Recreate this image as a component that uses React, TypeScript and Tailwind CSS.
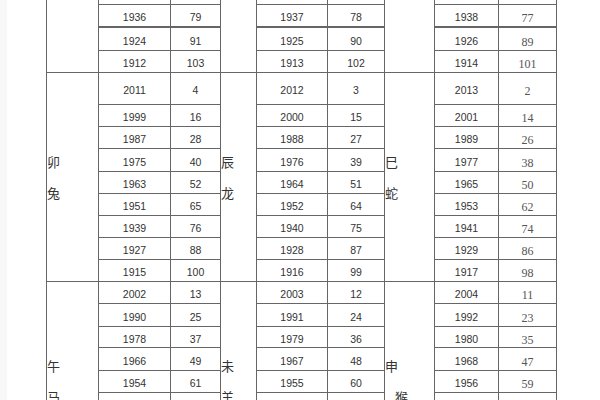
import React from 'react';

type Row = { y: [string, string, string]; a: [string, string, string]; h: string; thick?: boolean };

const blocks = [
  { label: 'w-[52px]', year: 'w-[72px]', age: 'w-[50px]', ageFont: "font-['Liberation_Sans',sans-serif] text-[10.5px] text-[#333]" },
  { label: 'w-[36px]', year: 'w-[71px]', age: 'w-[57px]', ageFont: "font-['Liberation_Sans',sans-serif] text-[10.5px] text-[#333]" },
  { label: 'w-[50px]', year: 'w-[64px]', age: 'w-[58px]', ageFont: "font-['Liberation_Serif',serif] text-[12px] text-[#555]" },
];

const topRows: Row[] = [
  { y: ['1948', '1949', '1950'], a: ['67', '66', '65'], h: 'h-[23px]' },
  { y: ['1936', '1937', '1938'], a: ['79', '78', '77'], h: 'h-[23px]', thick: true },
  { y: ['1924', '1925', '1926'], a: ['91', '90', '89'], h: 'h-[23px]' },
  { y: ['1912', '1913', '1914'], a: ['103', '102', '101'], h: 'h-[22px]' },
];

const midRows: Row[] = [
  { y: ['2011', '2012', '2013'], a: ['4', '3', '2'], h: 'h-[32px]' },
  { y: ['1999', '2000', '2001'], a: ['16', '15', '14'], h: 'h-[22px]' },
  { y: ['1987', '1988', '1989'], a: ['28', '27', '26'], h: 'h-[22px]' },
  { y: ['1975', '1976', '1977'], a: ['40', '39', '38'], h: 'h-[23px]' },
  { y: ['1963', '1964', '1965'], a: ['52', '51', '50'], h: 'h-[22px]' },
  { y: ['1951', '1952', '1953'], a: ['65', '64', '62'], h: 'h-[22px]' },
  { y: ['1939', '1940', '1941'], a: ['76', '75', '74'], h: 'h-[22px]' },
  { y: ['1927', '1928', '1929'], a: ['88', '87', '86'], h: 'h-[22px]' },
  { y: ['1915', '1916', '1917'], a: ['100', '99', '98'], h: 'h-[22px]' },
];

const lowRows: Row[] = [
  { y: ['2002', '2003', '2004'], a: ['13', '12', '11'], h: 'h-[22px]' },
  { y: ['1990', '1991', '1992'], a: ['25', '24', '23'], h: 'h-[23px]' },
  { y: ['1978', '1979', '1980'], a: ['37', '36', '35'], h: 'h-[21px]' },
  { y: ['1966', '1967', '1968'], a: ['49', '48', '47'], h: 'h-[23px]' },
  { y: ['1954', '1955', '1956'], a: ['61', '60', '59'], h: 'h-[22px]' },
  { y: ['', '', ''], a: ['', '', ''], h: 'h-[22px]' },
  { y: ['', '', ''], a: ['', '', ''], h: 'h-[22px]' },
  { y: ['', '', ''], a: ['', '', ''], h: 'h-[22px]' },
  { y: ['', '', ''], a: ['', '', ''], h: 'h-[22px]' },
];

type Label = { ch: string; cls?: string }[];

function Group({ rows, labels }: { rows: Row[]; labels: [Label, Label, Label] }) {
  return (
    <div className="flex">
      {blocks.map((b, bi) => (
        <div key={bi} className="flex">
          <div
            className={`${b.label} shrink-0 border-r border-b border-[#666] flex flex-col justify-center text-[13px] leading-[31px] text-[#333] font-['Noto_Sans_CJK_SC',sans-serif]`}
          >
            {labels[bi].map((l, li) => (
              <span key={li} className={l.cls ?? ''}>
                {l.ch}
              </span>
            ))}
          </div>
          <div className="flex flex-col">
            {rows.map((r, ri) => (
              <div key={ri} className={`flex ${r.h}`}>
                <div
                  className={`${b.year} shrink-0 border-r border-[#666] ${r.thick ? 'border-b-2' : 'border-b'} flex items-center justify-center pt-[5px] font-['Liberation_Sans',sans-serif] text-[10.5px] text-[#333]`}
                >
                  {r.y[bi]}
                </div>
                <div
                  className={`${b.age} shrink-0 border-r border-[#666] ${r.thick ? 'border-b-2' : 'border-b'} flex items-center justify-center pt-[5px] ${b.ageFont}`}
                >
                  {r.a[bi]}
                </div>
              </div>
            ))}
          </div>
        </div>
      ))}
    </div>
  );
}

export default function App() {
  return (
    <div className="w-[600px] h-[400px] overflow-hidden bg-white flex">
      <div className="w-[7px] shrink-0 bg-[#f8f8f8]" />
      <div className="ml-[39px] -mt-[18px] flex flex-col border-l border-[#666] self-start">
        <Group rows={topRows} labels={[[], [], []]} />
        <Group
          rows={midRows}
          labels={[
            [{ ch: '卯' }, { ch: '兔' }],
            [{ ch: '辰' }, { ch: '龙' }],
            [{ ch: '巳' }, { ch: '蛇' }],
          ]}
        />
        <Group
          rows={lowRows}
          labels={[
            [{ ch: '午' }, { ch: '马' }],
            [{ ch: '未' }, { ch: '羊' }],
            [{ ch: '申' }, { ch: '猴', cls: 'pl-[10px]' }],
          ]}
        />
      </div>
    </div>
  );
}
